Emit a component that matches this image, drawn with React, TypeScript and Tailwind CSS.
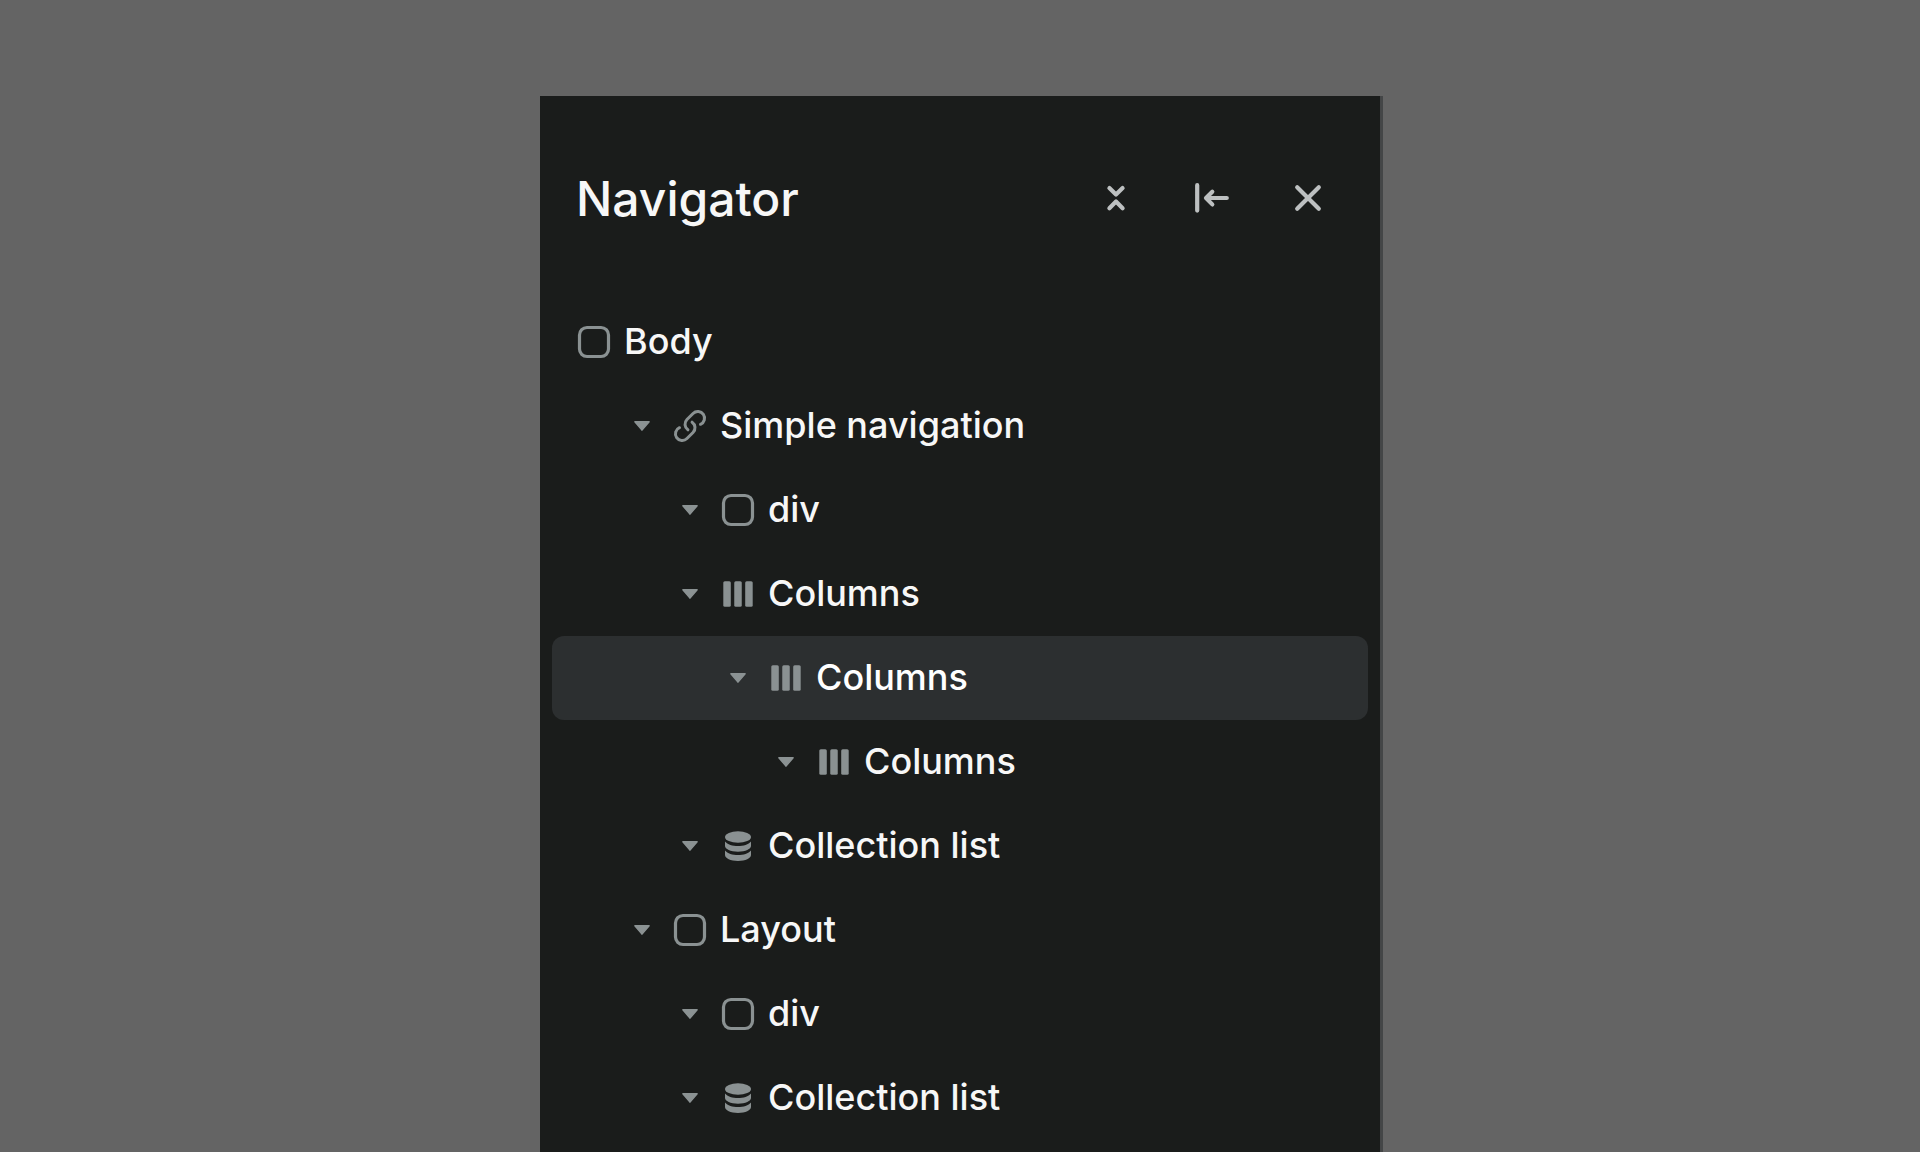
import { useState } from "react";
import type { ReactNode } from "react";

type Kind = "box" | "link" | "columns" | "collection";

interface Item {
  id: number;
  label: string;
  kind: Kind;
  depth: 0 | 1 | 2 | 3 | 4;
}

const items: Item[] = [
  { id: 1, label: "Body", kind: "box", depth: 0 },
  { id: 2, label: "Simple navigation", kind: "link", depth: 1 },
  { id: 3, label: "div", kind: "box", depth: 2 },
  { id: 4, label: "Columns", kind: "columns", depth: 2 },
  { id: 5, label: "Columns", kind: "columns", depth: 3 },
  { id: 6, label: "Columns", kind: "columns", depth: 4 },
  { id: 7, label: "Collection list", kind: "collection", depth: 2 },
  { id: 8, label: "Layout", kind: "box", depth: 1 },
  { id: 9, label: "div", kind: "box", depth: 2 },
  { id: 10, label: "Collection list", kind: "collection", depth: 2 },
];

const indents = ["pl-6", "pl-[72px]", "pl-[120px]", "pl-[168px]", "pl-[216px]"];

const glyphs: Record<Kind, ReactNode> = {
  box: <rect x="3.5" y="3.5" width="29" height="29" rx="7.5" fill="none" stroke="currentColor" strokeWidth="3.2" />,
  link: (
    <g fill="none" stroke="currentColor" strokeWidth="3" strokeLinecap="round">
      <path d="M28.5 16.3A6.7 6.7 0 1 0 21.06 5.46L14.96 11.56A6.7 6.7 0 0 0 15.9 21.8" />
      <path d="M7.5 19.7A6.7 6.7 0 1 0 14.94 30.54L21.04 24.44A6.7 6.7 0 0 0 20.1 14.2" />
    </g>
  ),
  columns: (
    <g fill="currentColor">
      <rect x="3.3" y="5.2" width="7.5" height="25.6" rx="1.5" />
      <rect x="14.25" y="5.2" width="7.5" height="25.6" rx="1.5" />
      <rect x="25.2" y="5.2" width="7.5" height="25.6" rx="1.5" />
    </g>
  ),
  collection: (
    <g fill="currentColor">
      <ellipse cx="18" cy="9" rx="13" ry="5.8" />
      <path d="M5 13.4C7.5 16.4 12.5 18 18 18S28.5 16.4 31 13.4V18C31 21 25.5 23.7 18 23.7S5 21 5 18Z" />
      <path d="M5 22.4C7.5 25.4 12.5 27 18 27S28.5 25.4 31 22.4V27C31 30.2 25.5 32.9 18 32.9S5 30.2 5 27Z" />
    </g>
  ),
};

function HeaderButton({ label, d }: { label: string; d: string }) {
  return (
    <button type="button" aria-label={label} className="grid size-12 place-items-center text-[#bdc0c1]">
      <svg viewBox="0 0 48 48" className="size-12" fill="none" stroke="currentColor" strokeWidth="4.2" strokeLinecap="round" strokeLinejoin="round">
        <path d={d} />
      </svg>
    </button>
  );
}

function Row({ item, selected, onSelect }: { item: Item; selected: boolean; onSelect: () => void }) {
  return (
    <li
      role="treeitem"
      aria-level={item.depth + 1}
      aria-selected={selected}
      className={`flex h-21 items-center gap-3 rounded-xl pr-6 ${indents[item.depth]} ${selected ? "bg-[#2c2f30] text-white" : "text-[#f7f7f7]"}`}
    >
      {item.depth > 0 && (
        <button type="button" aria-label={`Toggle ${item.label}`} className="size-9 shrink-0 text-[#8b9293]">
          <svg viewBox="0 0 36 36" className="size-9" fill="currentColor" stroke="currentColor" strokeWidth="1.5" strokeLinejoin="round">
            <path d="M10.9 13.7H25.1L18 22.1Z" />
          </svg>
        </button>
      )}
      <button type="button" onClick={onSelect} className="flex min-w-0 flex-1 items-center gap-3 text-left">
        <svg viewBox="0 0 36 36" aria-hidden="true" className="size-9 shrink-0 text-[#8a9192]">
          {glyphs[item.kind]}
        </svg>
        <span className="truncate pb-0.5 text-4xl leading-12 font-medium">{item.label}</span>
      </button>
    </li>
  );
}

export default function App() {
  const [selected, setSelected] = useState(5);
  return (
    <div className="flex min-h-screen flex-col items-center bg-[#646464] pt-24 font-['Inter',sans-serif]">
      <aside className="w-full max-w-[840px] flex-1 bg-[#1a1c1b] shadow-[3px_0_0_#444647]">
        <header className="flex h-51 items-center justify-between pr-12 pl-9">
          <h1 className="pt-0.5 text-5xl font-medium text-[#f7f7f7]">Navigator</h1>
          <div className="flex gap-12">
            <HeaderButton label="Collapse all" d="M17.4 14.1L24 20.6L30.6 14.1M17.4 34.2L24 27.6L30.6 34.2" />
            <HeaderButton label="Dock left" d="M9.2 11.2V36.6M38.8 24H18.4M24.3 17.8L18 24L24.3 30.4" />
            <HeaderButton label="Close" d="M13.2 13.2L34.8 34.8M34.8 13.2L13.2 34.8" />
          </div>
        </header>
        <ul role="tree" aria-label="Navigator" className="px-3">
          {items.map((item) => (
            <Row key={item.id} item={item} selected={item.id === selected} onSelect={() => setSelected(item.id)} />
          ))}
        </ul>
      </aside>
    </div>
  );
}
